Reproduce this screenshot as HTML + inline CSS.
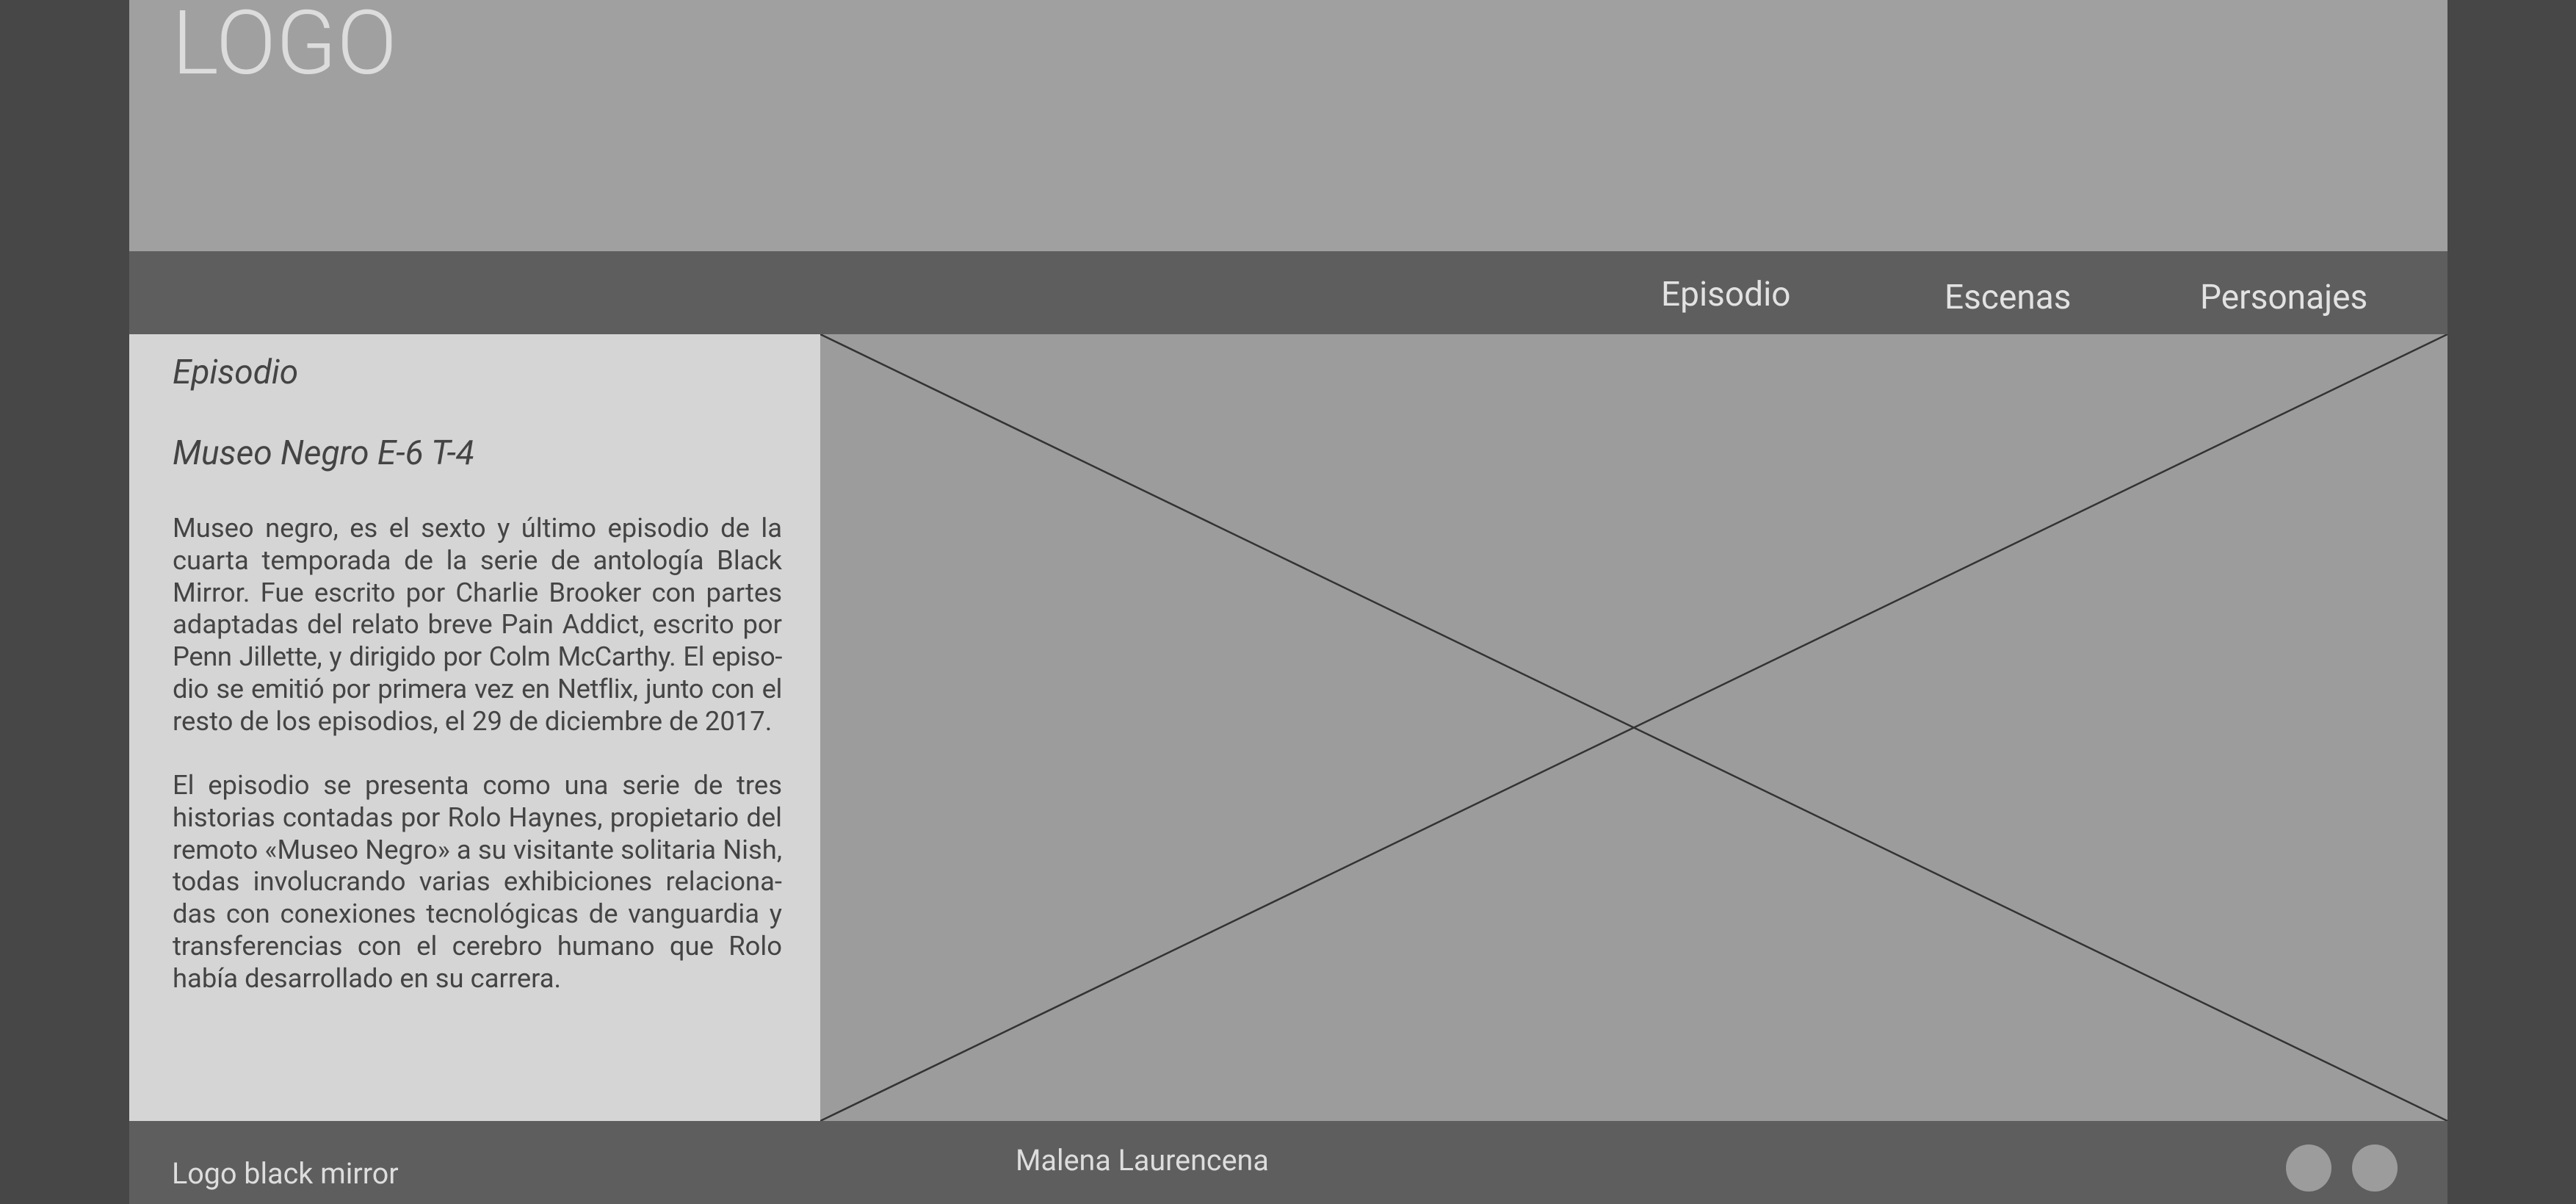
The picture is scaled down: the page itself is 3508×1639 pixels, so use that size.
<!DOCTYPE html>
<html><head><meta charset="utf-8"><style>
*{margin:0;padding:0;box-sizing:border-box}
html,body{width:3508px;height:1639px;overflow:hidden;background:#474747;font-family:"Roboto","Liberation Sans",sans-serif}
.c{position:absolute;left:176px;width:3157px}
#hd{top:0;height:342px;background:#a0a0a0}
#logo{position:absolute;left:58px;top:-12px;font-size:121px;color:#dcdcdc;font-weight:300}
#nav{top:342px;height:113px;background:#5e5e5e}
.n{position:absolute;font-size:46px;color:#e2e2e2;line-height:1}
#lp{position:absolute;left:176px;top:455px;width:941px;height:1071px;background:#d5d5d5}
#img{position:absolute;left:1117px;top:455px;width:2216px;height:1071px;background:#9c9c9c}
#ft{top:1526px;height:113px;background:#5e5e5e}
.h{position:absolute;left:59px;font-style:italic;font-size:46px;color:#444;line-height:1}
.t{position:absolute;left:59px;width:830px;font-size:36.4px;line-height:43.8px;color:#444}
.t div{text-align:justify;text-align-last:justify;white-space:nowrap}
.t div.l{text-align-last:left}
.t div.s{letter-spacing:-0.4px}
.f{position:absolute;font-size:39.5px;color:#ddd;line-height:1}
.ci{position:absolute;top:32px;width:62px;height:64px;border-radius:50%;background:#9c9c9c}
</style></head><body>
<div class="c" id="hd"><div id="logo">LOGO</div></div>
<div class="c" id="nav">
<div class="n" style="left:2086px;top:36px">Episodio</div>
<div class="n" style="left:2472px;top:40px">Escenas</div>
<div class="n" style="left:2820px;top:40px">Personajes</div>
</div>
<div id="lp">
<div class="h" style="top:29px">Episodio</div>
<div class="h" style="top:139px">Museo Negro E-6 T-4</div>
<div class="t" style="top:242px">
<div>Museo negro, es el sexto y último episodio de la</div>
<div>cuarta temporada de la serie de antología Black</div>
<div>Mirror. Fue escrito por Charlie Brooker con partes</div>
<div>adaptadas del relato breve Pain Addict, escrito por</div>
<div class="s">Penn Jillette, y dirigido por Colm McCarthy. El episo-</div>
<div class="s">dio se emitió por primera vez en Netflix, junto con el</div>
<div class="l">resto de los episodios, el 29 de diciembre de 2017.</div>
</div>
<div class="t" style="top:592px">
<div>El episodio se presenta como una serie de tres</div>
<div>historias contadas por Rolo Haynes, propietario del</div>
<div>remoto «Museo Negro» a su visitante solitaria Nish,</div>
<div>todas involucrando varias exhibiciones relaciona-</div>
<div>das con conexiones tecnológicas de vanguardia y</div>
<div>transferencias con el cerebro humano que Rolo</div>
<div class="l">había desarrollado en su carrera.</div>
</div>
</div>
<div id="img"><svg width="2216" height="1071" style="display:block"><line x1="0" y1="0" x2="2216" y2="1071" stroke="#333" stroke-width="2.5"/><line x1="0" y1="1071" x2="2216" y2="0" stroke="#333" stroke-width="2.5"/></svg></div>
<div class="c" id="ft">
<div class="f" style="left:58px;top:52px">Logo black mirror</div>
<div class="f" style="left:1207px;top:34px">Malena Laurencena</div>
<div class="ci" style="left:2937px"></div>
<div class="ci" style="left:3027px"></div>
</div>
</body></html>
